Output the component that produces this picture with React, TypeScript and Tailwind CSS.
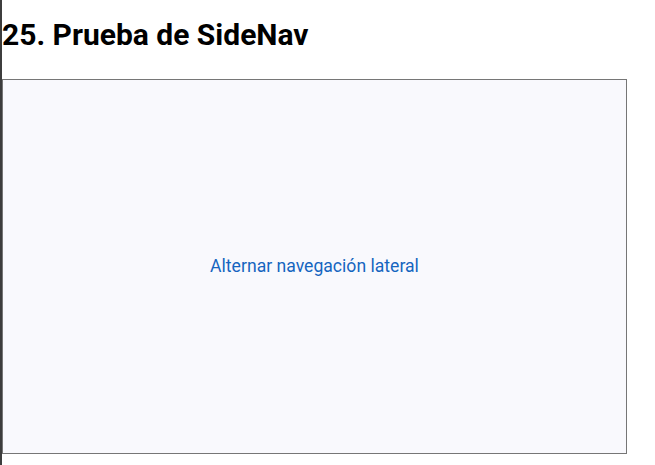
export default function App() {
  return (
    <div className="flex min-h-screen bg-white" style={{ fontFamily: "Roboto, 'Liberation Sans', sans-serif" }}>
      {/* side rail */}
      <div className="w-[2px] shrink-0 bg-[#3d3d3d]"></div>

      <main className="flex-1">
        <h1 className="mt-[11px] mb-[20px] text-[30px] font-bold leading-[48px] text-black">
          25. Prueba de SideNav
        </h1>

        <div className="flex h-[375px] w-[625px] items-center justify-center border border-[#767676] bg-[#f9f9fd]">
          <button className="text-[17.6px] text-[#1565c0]">Alternar navegación lateral</button>
        </div>
      </main>
    </div>
  );
}
